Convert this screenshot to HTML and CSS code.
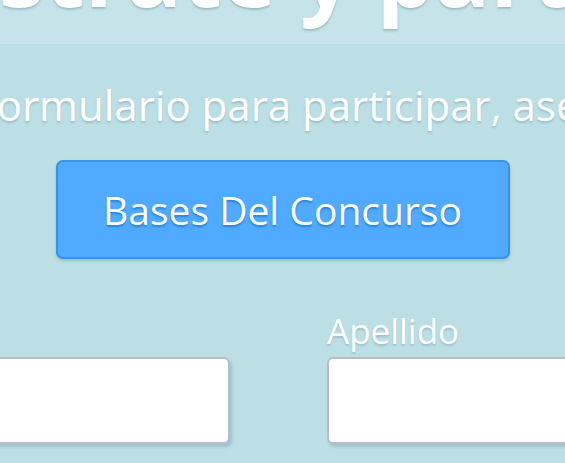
FILE: index.html
```html
<!DOCTYPE html>
<html lang="es">
<head>
<meta charset="utf-8">
<title>Regístrate y participa</title>
<link rel="stylesheet" href="styles.css">
</head>
<body>
  <header class="band">
    <h1 class="title">¡Regístrate y participa!</h1>
  </header>
  <main class="content">
    <p class="lead">Completa el formulario para participar, asegúrate de</p>
    <a class="btn" href="#">Bases Del Concurso</a>
    <form class="form">
      <div class="field">
        <label class="label" for="nombre">Nombre</label>
        <input class="input" id="nombre" type="text">
      </div>
      <div class="field">
        <label class="label" for="apellido">Apellido</label>
        <input class="input" id="apellido" type="text">
      </div>
    </form>
  </main>
</body>
</html>
```
FILE: styles.css
```css
html, body {
  margin: 0;
  padding: 0;
}
body {
  background: #bcdfe6;
  font-family: "Open Sans", "DejaVu Sans", sans-serif;
  color: #ffffff;
  overflow: hidden;
  height: 463px;
}
.band {
  background: #c5e3e9;
  height: 18px;
  display: flex;
  justify-content: center;
  align-items: flex-end;
  padding: 0 0 26px 28px;
  box-sizing: content-box;
}
.title {
  margin: 0;
  font-size: 92px;
  line-height: 92px;
  font-weight: 700;
  white-space: nowrap;
  flex: none;
  position: relative;
  top: 0;
  text-shadow: 0 2px 2px rgba(90, 120, 130, 0.35);
}
.content {
  display: flex;
  flex-direction: column;
  align-items: center;
}
.lead {
  margin: 37px 60px 0 0;
  font-size: 42px;
  line-height: 48px;
  font-weight: 500;
  white-space: nowrap;
  flex: none;
  text-shadow: 0 2px 2px rgba(90, 120, 130, 0.3);
}
.btn {
  margin-top: 31px;
  width: 454px;
  height: 99px;
  box-sizing: border-box;
  display: flex;
  align-items: center;
  justify-content: center;
  background: #50aaff;
  border: 2px solid #3a92e4;
  border-radius: 7px;
  box-shadow: 0 2px 3px rgba(40, 90, 120, 0.25);
  color: #ffffff;
  text-decoration: none;
  font-size: 39px;
  font-weight: 500;
  text-shadow: 0 2px 2px #2a84d6;
}
.form {
  margin-top: 52px;
  display: grid;
  grid-template-columns: 400px 400px;
  column-gap: 97px;
  justify-content: center;
  width: 565px;
  padding-right: 8px;
  box-sizing: border-box;
}
.field {
  display: flex;
  flex-direction: column;
}
.label {
  font-size: 35px;
  line-height: 40px;
  font-weight: 500;
  text-shadow: 0 2px 2px rgba(90, 120, 130, 0.3);
  margin-bottom: 6px;
}
.input {
  height: 87px;
  box-sizing: border-box;
  background: #ffffff;
  border: 2px solid #b7bcc9;
  border-radius: 6px;
  box-shadow: 2px 3px 3px rgba(60, 80, 100, 0.2);
  margin: 0;
}
```
